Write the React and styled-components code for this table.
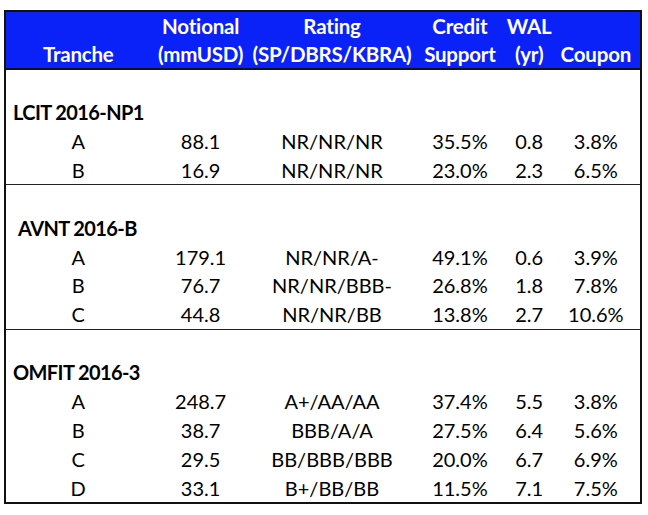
import React from "react";
import styled, { createGlobalStyle } from "styled-components";

const Global = createGlobalStyle`
  html, body { margin: 0; padding: 0; background: #ffffff; }
  body { font-family: "Lato", "Open Sans", sans-serif; }
`;

const Page = styled.div`
  padding: 10px 0 0 4px;
`;

const Table = styled.table`
  border-collapse: collapse;
  border: 2px solid #111;
  table-layout: fixed;
  width: 638px;
  font-family: "Lato", "Open Sans", sans-serif;
  font-size: 20px;
  color: #000;
`;

const HeadRow = styled.tr`
  background: #0a22f8;
  border-bottom: 2px solid #111;
`;

const HeadCell = styled.th`
  color: #fff;
  font-weight: 700;
  font-size: 20.5px;
  line-height: 28px;
  height: 56px;
  padding: 0;
  text-align: center;
  vertical-align: bottom;
  white-space: nowrap;
  letter-spacing: -0.2px;
`;

const Group = styled.tbody`
  border-bottom: ${(p) => (p.$last ? "none" : "1.5px solid #222")};
`;

const Blank = styled.tr`
  height: 28.8px;
`;

const TitleCell = styled.td`
  font-weight: 700;
  height: 28.8px;
  padding: 0 0 0 ${(p) => p.$indent || 7}px;
  text-align: left;
  white-space: nowrap;
  letter-spacing: -0.6px;
`;

const Cell = styled.td`
  height: 28.8px;
  padding: 0;
  text-align: center;
  white-space: nowrap;
`;

const widths = [145, 100, 162, 93, 45, 89];

const groups = [
  {
    name: "LCIT 2016-NP1",
    indent: 7,
    rows: [
      ["A", "88.1", "NR/NR/NR", "35.5%", "0.8", "3.8%"],
      ["B", "16.9", "NR/NR/NR", "23.0%", "2.3", "6.5%"],
    ],
  },
  {
    name: "AVNT 2016-B",
    indent: 12,
    rows: [
      ["A", "179.1", "NR/NR/A-", "49.1%", "0.6", "3.9%"],
      ["B", "76.7", "NR/NR/BBB-", "26.8%", "1.8", "7.8%"],
      ["C", "44.8", "NR/NR/BB", "13.8%", "2.7", "10.6%"],
    ],
  },
  {
    name: "OMFIT 2016-3",
    indent: 7,
    rows: [
      ["A", "248.7", "A+/AA/AA", "37.4%", "5.5", "3.8%"],
      ["B", "38.7", "BBB/A/A", "27.5%", "6.4", "5.6%"],
      ["C", "29.5", "BB/BBB/BBB", "20.0%", "6.7", "6.9%"],
      ["D", "33.1", "B+/BB/BB", "11.5%", "7.1", "7.5%"],
    ],
  },
];

const headers = [
  ["Tranche"],
  ["Notional", "(mmUSD)"],
  ["Rating", "(SP/DBRS/KBRA)"],
  ["Credit", "Support"],
  ["WAL", "(yr)"],
  ["Coupon"],
];

export default function App() {
  return (
    <Page>
      <Global />
      <Table>
        <colgroup>
          {widths.map((w, i) => (
            <col key={i} style={{ width: w }} />
          ))}
        </colgroup>
        <thead>
          <HeadRow>
            {headers.map((h, i) => (
              <HeadCell key={i}>
                {h.map((line, j) => (
                  <div key={j}>{line}</div>
                ))}
              </HeadCell>
            ))}
          </HeadRow>
        </thead>
        {groups.map((g, gi) => (
          <Group key={g.name} $last={gi === groups.length - 1}>
            <Blank>
              <td colSpan={6} />
            </Blank>
            <tr>
              <TitleCell colSpan={6} $indent={g.indent}>
                {g.name}
              </TitleCell>
            </tr>
            {g.rows.map((r) => (
              <tr key={r[0]}>
                {r.map((v, i) => (
                  <Cell key={i}>{v}</Cell>
                ))}
              </tr>
            ))}
          </Group>
        ))}
      </Table>
    </Page>
  );
}
